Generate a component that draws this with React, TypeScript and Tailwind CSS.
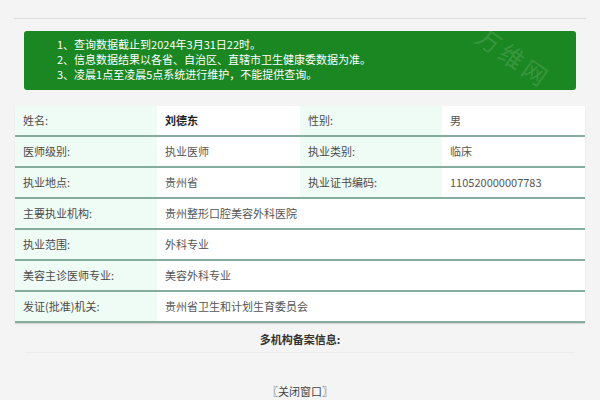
const font = { fontFamily: '"Noto Sans CJK SC", "Noto Sans", sans-serif' };

type Cell = { label: string; value: string; bold?: boolean };

const rows: Cell[][] = [
  [
    { label: "姓名:", value: "刘德东", bold: true },
    { label: "性别:", value: "男" },
  ],
  [
    { label: "医师级别:", value: "执业医师" },
    { label: "执业类别:", value: "临床" },
  ],
  [
    { label: "执业地点:", value: "贵州省" },
    { label: "执业证书编码:", value: "110520000007783" },
  ],
  [{ label: "主要执业机构:", value: "贵州整形口腔美容外科医院" }],
  [{ label: "执业范围:", value: "外科专业" }],
  [{ label: "美容主诊医师专业:", value: "美容外科专业" }],
  [{ label: "发证(批准)机关:", value: "贵州省卫生和计划生育委员会" }],
];

export default function App() {
  return (
    <div className="h-[400px] w-[600px] overflow-hidden bg-[#f4f4f4] text-[11px] text-[#444]" style={font}>
      <div className="mx-[14px] h-[19px] border-b border-[#dcdcdc]" />

      <div className="relative mx-[24px] mt-[12px] h-[59px] overflow-hidden rounded-[3px] bg-[#1b8722] pl-[33px] pt-[6px] text-[11px] leading-[15px] text-white">
        <p className="relative">1、查询数据截止到2024年3月31日22时。</p>
        <p className="relative">2、信息数据结果以各省、自治区、直辖市卫生健康委数据为准。</p>
        <p className="relative">3、凌晨1点至凌晨5点系统进行维护，不能提供查询。</p>
        <span className="absolute left-[448px] top-[14px] rotate-[35deg] text-[24px] leading-none tracking-[4px] text-white/15">
          万维网
        </span>
      </div>

      <div className="mx-[15px] mt-[16px] bg-white shadow-[0_1px_1px_rgba(0,0,0,0.12)]">
        {rows.map((row, i) => (
          <div key={i} className="flex h-[31px] border-b-2 border-[#86ac9d]">
            {row.map((cell, j) => (
              <div key={j} className={row.length === 1 ? "flex flex-1" : "flex w-[285px]"}>
                <div className="flex w-[142px] items-center bg-[#effbf5] pl-[8px] text-[#4a4a4a]">{cell.label}</div>
                <div
                  className={
                    "flex flex-1 items-center pl-[8px] " + (cell.bold ? "font-bold text-[#222]" : "text-[#555]")
                  }
                >
                  {cell.value}
                </div>
              </div>
            ))}
          </div>
        ))}
      </div>

      <div className="mx-[25px] border-b border-[#ebebeb] pb-[4px] pt-[8px] text-center font-bold leading-[17px] text-[#333]">
        多机构备案信息:
      </div>

      <div className="mt-[30px] text-center text-[#444]">〖关闭窗口〗</div>
    </div>
  );
}
